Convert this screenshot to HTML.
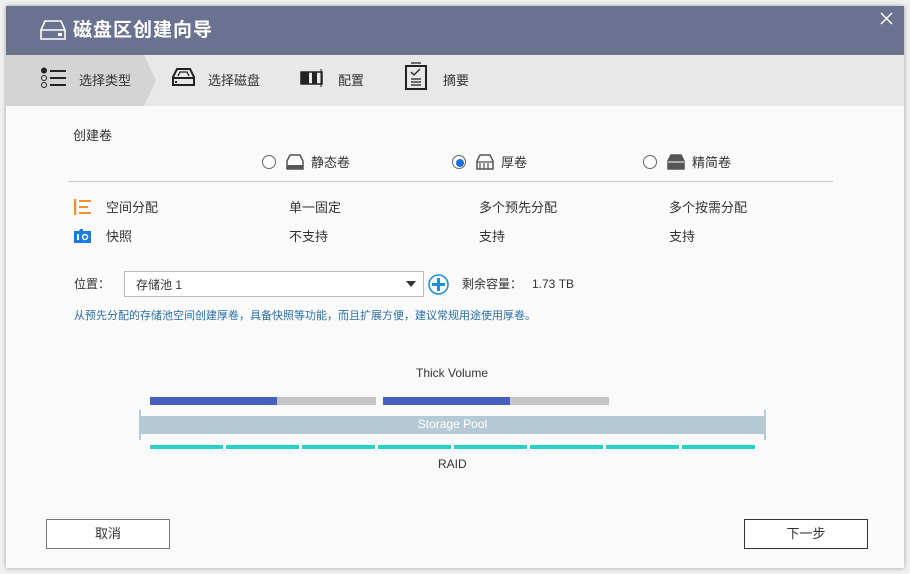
<!DOCTYPE html>
<html><head><meta charset="utf-8">
<style>
*{margin:0;padding:0;box-sizing:border-box}
body{width:910px;height:574px;background:#f0f0f0;font-family:"Liberation Sans","Noto Sans CJK SC",sans-serif;position:relative;overflow:hidden;color:#333}
.win{position:absolute;left:6px;top:6px;width:898px;height:562px;background:#fafafa;box-shadow:0 0 4px rgba(0,0,0,.35)}
.hd{position:absolute;left:0;top:0;width:898px;height:49px;background:#6b7290;color:#fff}
.hd .t{position:absolute;left:67px;top:9px;font-size:19px;font-weight:bold;letter-spacing:1px}
.steps{position:absolute;left:0;top:49px;width:898px;height:51px;background:#e8e8e8}
.s{position:absolute;top:15px;font-size:13px;color:#333}
.a{position:absolute;font-size:13px;color:#333}
.line{position:absolute;left:62px;top:175px;width:765px;height:1px;background:#c8c8c8}
.radio{position:absolute;width:14px;height:14px;border:1px solid #666;border-radius:50%;background:#fff}
.btn{position:absolute;top:513px;width:124px;height:30px;background:#fff;font-size:13px;text-align:center;line-height:27px}
</style></head><body>
<div class="win">
 <div class="hd">
  <svg style="position:absolute;left:34px;top:14px" width="26" height="20" viewBox="0 0 26 20"><path d="M1 10 L5 1 H21 L25 10 V19 H1 Z M1 10 H25" fill="none" stroke="#fff" stroke-width="1.6"/><rect x="18" y="13" width="4" height="3" fill="#fff"/></svg>
  <div class="t">磁盘区创建向导</div>
  <svg style="position:absolute;left:874px;top:6px" width="13" height="13"><path d="M1 1 L12 12 M12 1 L1 12" stroke="#fff" stroke-width="1.5"/></svg>
 </div>
 <div class="steps">
  <svg style="position:absolute;left:0;top:0" width="152" height="51"><polygon points="0,0 138,0 150,25.5 138,51 0,51" fill="#d4d4d4"/></svg>
  <svg style="position:absolute;left:34px;top:12px" width="26" height="24"><circle cx="4" cy="3.5" r="3" fill="#222"/><circle cx="4" cy="11" r="2.5" fill="none" stroke="#222"/><circle cx="4" cy="18" r="2.5" fill="none" stroke="#222"/><path d="M10 4H26M10 11H26M10 18H26" stroke="#222" stroke-width="2"/></svg>
  <div class="s" style="left:73px">选择类型</div>
  <svg style="position:absolute;left:166px;top:12px" width="23" height="20"><path d="M1 10 L5 2 H18 L22 10 V18 H1 Z" fill="none" stroke="#222" stroke-width="2"/><path d="M2 11H21" stroke="#222" stroke-width="2"/><path d="M6 9 L8 5 H15 L17 9" fill="none" stroke="#222" stroke-width="1.3"/><rect x="3" y="14" width="2" height="2" fill="#222"/></svg>
  <div class="s" style="left:202px">选择磁盘</div>
  <svg style="position:absolute;left:294px;top:13px" width="26" height="20"><rect x="1" y="4" width="21" height="12" fill="none" stroke="#222" stroke-width="1.5"/><rect x="1" y="4" width="8" height="12" fill="#222"/><rect x="12" y="4" width="5" height="12" fill="#222"/><path d="M21 1V19" stroke="#222"/></svg>
  <div class="s" style="left:332px">配置</div>
  <svg style="position:absolute;left:399px;top:7px" width="22" height="28"><rect x="1" y="4" width="20" height="23" fill="none" stroke="#222" stroke-width="2"/><path d="M6 1H16M6 10L9 13L15 7M6 17H16M6 20H16M6 23H16" fill="none" stroke="#222" stroke-width="1.3"/></svg>
  <div class="s" style="left:437px">摘要</div>
 </div>
 <div class="a" style="left:67px;top:119px">创建卷</div>
 <div class="radio" style="left:256px;top:149px"></div>
 <svg style="position:absolute;left:280px;top:148px" width="18" height="16"><path d="M1 7L4 1H14L17 7V15H1Z" fill="none" stroke="#555" stroke-width="1.5"/><rect x="1" y="11" width="16" height="4" fill="#555"/></svg>
 <div class="a" style="left:305px;top:146px">静态卷</div>
 <div class="radio" style="left:446px;top:149px"></div>
 <div style="position:absolute;left:450px;top:153px;width:8px;height:8px;border-radius:50%;background:#1a6fe0"></div>
 <svg style="position:absolute;left:470px;top:148px" width="18" height="16"><path d="M1 7L4 1H14L17 7V15H1Z" fill="none" stroke="#555" stroke-width="1.5"/><path d="M1 8H17M4 9V15M8 9V15M12 9V15" stroke="#555" stroke-width="1.2"/></svg>
 <div class="a" style="left:495px;top:146px">厚卷</div>
 <div class="radio" style="left:637px;top:149px"></div>
 <svg style="position:absolute;left:661px;top:148px" width="18" height="16"><path d="M1 7L4 1H14L17 7V15H1Z" fill="#555" stroke="#555" stroke-width="1.5"/><path d="M1 8H17" stroke="#fff"/></svg>
 <div class="a" style="left:686px;top:146px">精简卷</div>
 <div class="line"></div>
 <svg style="position:absolute;left:68px;top:193px" width="18" height="16"><path d="M1 0V16" stroke="#f39030" stroke-width="2.5"/><path d="M5 2H17M5 8H14M5 14H17" stroke="#f39030" stroke-width="2"/></svg>
 <div class="a" style="left:100px;top:191px">空间分配</div>
 <div class="a" style="left:283px;top:191px">单一固定</div>
 <div class="a" style="left:473px;top:191px">多个预先分配</div>
 <div class="a" style="left:663px;top:191px">多个按需分配</div>
 <svg style="position:absolute;left:68px;top:223px" width="17" height="14"><path d="M0 2H5L6 0H9V2H17V14H0Z" fill="#1a7ae0"/><rect x="3" y="5" width="2" height="6" fill="#fff"/><circle cx="11" cy="8" r="2.5" fill="none" stroke="#fff" stroke-width="1.5"/></svg>
 <div class="a" style="left:100px;top:220px">快照</div>
 <div class="a" style="left:283px;top:220px">不支持</div>
 <div class="a" style="left:473px;top:220px">支持</div>
 <div class="a" style="left:663px;top:220px">支持</div>
 <div class="a" style="left:68px;top:269px;font-size:12px">位置：</div>
 <div style="position:absolute;left:118px;top:265px;width:300px;height:26px;background:#fff;border:1px solid #bbb"></div>
 <div class="a" style="left:130px;top:270px;font-size:12px">存储池 1</div>
 <div style="position:absolute;left:400px;top:275px;width:0;height:0;border-left:5px solid transparent;border-right:5px solid transparent;border-top:6px solid #333"></div>
 <svg style="position:absolute;left:422px;top:268px" width="21" height="21"><circle cx="10.5" cy="10.5" r="9.5" fill="#fff" stroke="#1a90d8" stroke-width="1.6"/><path d="M10.5 4V17M4 10.5H17" stroke="#1a90d8" stroke-width="3"/></svg>
 <div class="a" style="left:456px;top:269px;font-size:12px">剩余容量：&nbsp;&nbsp;&nbsp;1.73 TB</div>
 <div class="a" style="left:68px;top:301px;font-size:11px;color:#2a6fa8">从预先分配的存储池空间创建厚卷，具备快照等功能，而且扩展方便，建议常规用途使用厚卷。</div>
 <div class="a" style="left:410px;top:360px;font-size:12px">Thick Volume</div>
 <div style="position:absolute;left:144px;top:391px;width:127px;height:8px;background:#4560bd"></div>
 <div style="position:absolute;left:271px;top:391px;width:99px;height:8px;background:#c5c5c5"></div>
 <div style="position:absolute;left:377px;top:391px;width:127px;height:8px;background:#4560bd"></div>
 <div style="position:absolute;left:504px;top:391px;width:99px;height:8px;background:#c5c5c5"></div>
 <div style="position:absolute;left:133px;top:404px;width:2px;height:30px;background:#b6cad6"></div>
 <div style="position:absolute;left:758px;top:404px;width:2px;height:30px;background:#b6cad6"></div>
 <div style="position:absolute;left:135px;top:410px;width:623px;height:18px;background:#b6cad6;color:#fff;font-size:12px;text-align:center;line-height:17px">Storage Pool</div>
 <div style="position:absolute;left:144px;top:439px;width:606px;height:4px;background:repeating-linear-gradient(90deg,#22d3c3 0,#22d3c3 73px,#fafafa 73px,#fafafa 76px)"></div>
 <div class="a" style="left:432px;top:451px;font-size:12px">RAID</div>
 <div class="btn" style="left:40px;border:1px solid #777">取消</div>
 <div class="btn" style="left:738px;border:1px solid #333">下一步</div>
</div>
</body></html>
